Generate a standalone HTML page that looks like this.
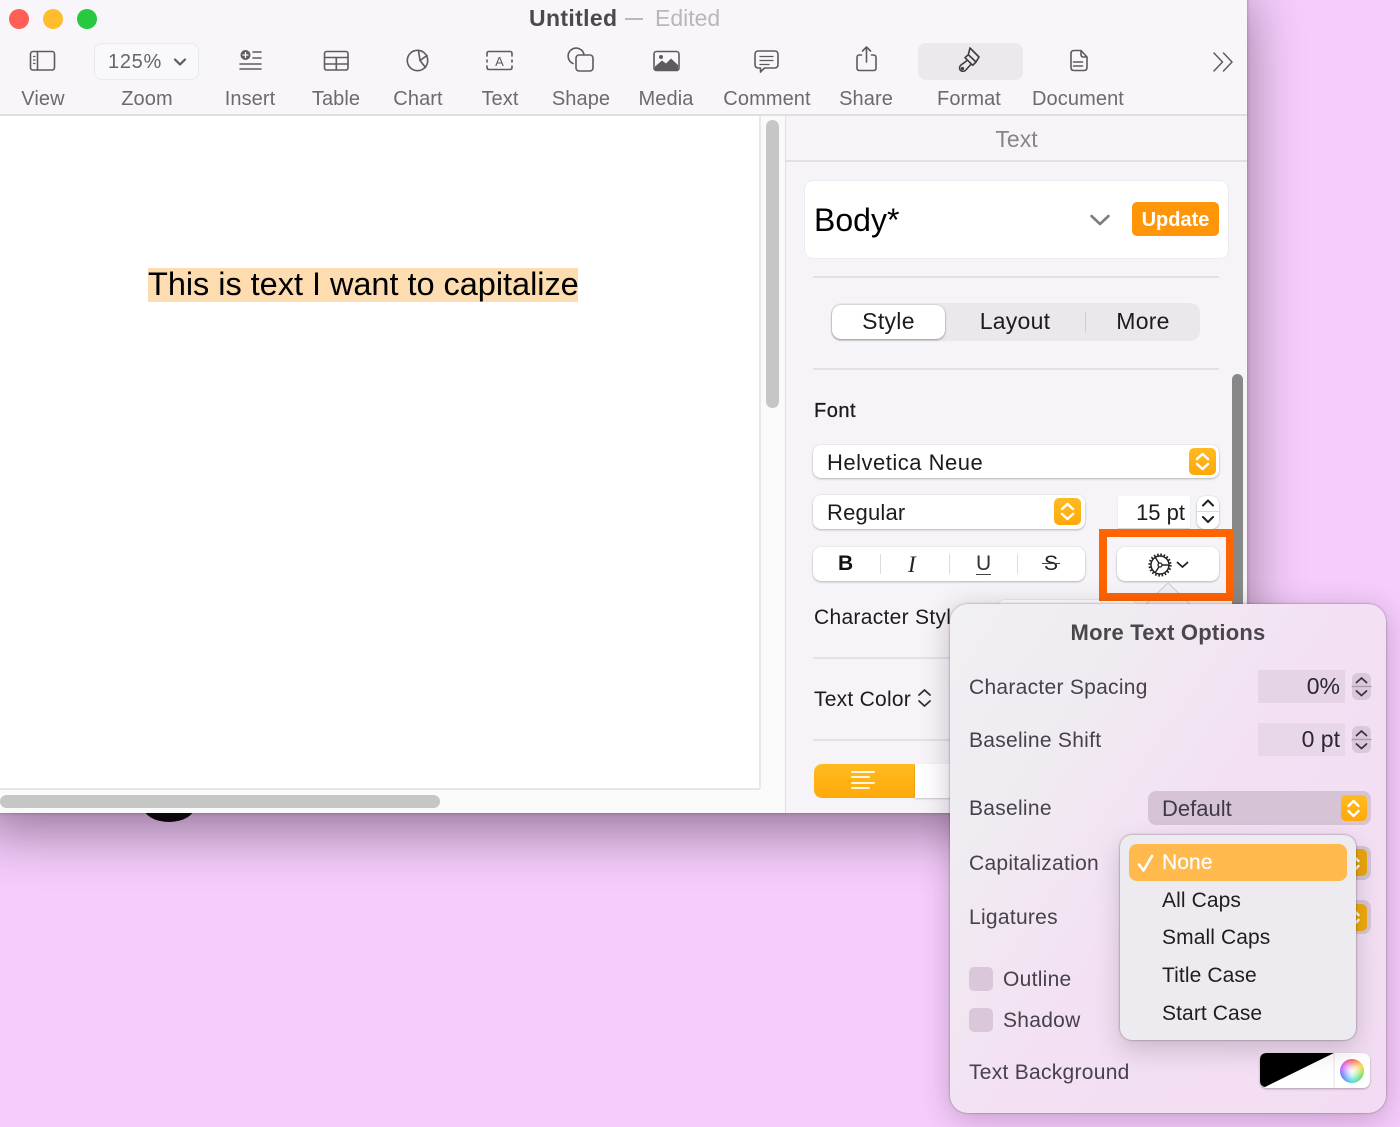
<!DOCTYPE html>
<html><head><meta charset="utf-8"><style>
html,body{margin:0;padding:0}
body{width:1400px;height:1127px;position:relative;overflow:hidden;background:#f5cdfb;font-family:"Liberation Sans",sans-serif;color:#1d1b1e}
div,span,svg{position:absolute}
.t{white-space:nowrap;line-height:1}
.l{font-size:20px;color:#6d6a6e;white-space:nowrap;text-align:center;line-height:1;top:89px;letter-spacing:.1px}
.p{font-size:21px;color:#46414a;white-space:nowrap;line-height:1;letter-spacing:.28px}
.m{font-size:21px;color:#1f1d20;white-space:nowrap;line-height:1;left:1162px;letter-spacing:.1px}
.sep{background:#e3e1e5;height:2px}
.f{background:#fff;border-radius:8px;box-shadow:0 1px 2px rgba(0,0,0,.25),0 0 1px rgba(0,0,0,.15)}
.o{background:linear-gradient(#ffbb22,#ffa908);border-radius:5px}
</style></head><body>

<!-- black blob behind window -->
<div style="left:143px;top:790px;width:52px;height:32px;background:#000;border-radius:50%"></div>

<!-- window -->
<div style="left:-20px;top:-20px;width:1267px;height:833px;background:#f8f6fa;border-radius:0 0 14px 14px;border-top-right-radius:20px;box-shadow:0 18px 55px rgba(40,20,40,.48),0 0 3px rgba(0,0,0,.3);overflow:hidden">
  <div style="left:20px;top:134px;width:1267px;height:2px;background:#e0dee2"></div>
  <div style="left:0;top:136px;width:780px;height:672px;background:#fff"></div>
  <div style="left:780px;top:136px;width:26px;height:697px;background:#fbfafb"></div>
  <div style="left:0;top:808px;width:806px;height:25px;background:#fafafa"></div>
  <div style="left:0;top:808px;width:780px;height:2px;background:#e6e5e7"></div>
  <div style="left:779px;top:136px;width:2px;height:673px;background:#e8e7e9"></div>
  <div style="left:805px;top:136px;width:2px;height:697px;background:#e0dee2"></div>
  <div style="left:806px;top:136px;width:461px;height:697px;background:#f6f4f8"></div>
</div>

<!-- traffic lights -->
<div style="left:9px;top:9px;width:20px;height:20px;border-radius:50%;background:#ff5f57"></div>
<div style="left:43px;top:9px;width:20px;height:20px;border-radius:50%;background:#ffbd2e"></div>
<div style="left:77px;top:9px;width:20px;height:20px;border-radius:50%;background:#28c840"></div>

<!-- title -->
<div class="t" style="left:529px;top:7px;font-size:23px;font-weight:bold;color:#4c494d;letter-spacing:.35px">Untitled</div>
<div style="left:625px;top:18px;width:18px;height:2px;background:#bbb8bc"></div>
<div class="t" style="left:655px;top:7px;font-size:23px;color:#bab7bb">Edited</div>

<!-- toolbar labels -->
<div class="l" style="left:3px;width:80px">View</div>
<div class="l" style="left:107px;width:80px">Zoom</div>
<div class="l" style="left:210px;width:80px">Insert</div>
<div class="l" style="left:296px;width:80px">Table</div>
<div class="l" style="left:378px;width:80px">Chart</div>
<div class="l" style="left:460px;width:80px">Text</div>
<div class="l" style="left:541px;width:80px">Shape</div>
<div class="l" style="left:626px;width:80px">Media</div>
<div class="l" style="left:717px;width:100px">Comment</div>
<div class="l" style="left:826px;width:80px">Share</div>
<div class="l" style="left:929px;width:80px">Format</div>
<div class="l" style="left:1018px;width:120px">Document</div>

<!-- zoom control -->
<div style="left:94px;top:43px;width:103px;height:35px;border:1px solid #ebe9ed;border-radius:8px;background:#f9f8fb"></div>
<div class="t" style="left:108px;top:52px;font-size:20px;color:#66636a;letter-spacing:.7px">125%</div>
<!-- format highlight -->
<div style="left:918px;top:43px;width:105px;height:37px;background:#ebe9ed;border-radius:8px"></div>

<!-- toolbar icons -->
<svg style="left:0;top:0" width="1247" height="90" fill="none" stroke="#5e5b60" stroke-width="1.6" stroke-linecap="round" stroke-linejoin="round">
  <path d="M175 59.500l5 5 5-5" stroke-width="2.200"/>
  <!-- view -->
  <rect x="30.500" y="51.500" width="24" height="18.500" rx="2.500"/><path d="M37.500 52v18"/><path d="M33.500 56.500h1.500M33.500 60h1.500M33.500 63.500h1.500" stroke-width="1.200"/>
  <!-- insert -->
  <circle cx="245.500" cy="55" r="5" fill="#5e5b60" stroke="none"/><path d="M243 55h5M245.500 52.500v5" stroke="#fff" stroke-width="1.300"/><path d="M253 52h8M253 58h8M240 64h21M240 69h21"/>
  <!-- table -->
  <rect x="324.500" y="51.500" width="23.500" height="18.500" rx="2"/><path d="M325 57.500h23M325 64h23M336.300 57.500v12.500"/>
  <!-- chart -->
  <circle cx="417.500" cy="60.500" r="10.200"/><path d="M418.500 50.500l1.500 10 7-5M420 60.500l5.500 7"/>
  <!-- text -->
  <path d="M487 56v-2.500q0-2 2-2h21q2 0 2 2v2.500M487 60v2M512 60v2M487 66v1.500q0 2 2 2h21q2 0 2-2v-1.500"/>
  <text x="499.500" y="66" font-family="Liberation Sans" font-size="13" fill="#5e5b60" stroke="none" text-anchor="middle">A</text>
  <!-- shape -->
  <path d="M573 63.500a8 8 0 1 1 11-8.800"/><rect x="576" y="55" width="17" height="16" rx="3"/>
  <!-- media -->
  <rect x="654" y="51.500" width="25" height="19" rx="2.500"/><path d="M655 70v-3.500l7-6 4 3 5-5 7 6.500v5z" fill="#5e5b60" stroke="none"/><circle cx="661" cy="57" r="2" fill="#5e5b60" stroke="none"/>
  <!-- comment -->
  <path d="M758.500 51h16q3.500 0 3.500 3.500v10q0 3.500-3.500 3.500h-10l-4 4v-4h-2q-3.500 0-3.500-3.500v-10q0-3.500 3.500-3.500z"/><path d="M760 56.500h13M760 60.500h13M760 64.500h9" stroke-width="1.300"/>
  <!-- share -->
  <path d="M861.500 55h-2q-2.500 0-2.500 2.500V68q0 2.500 2.500 2.500h14q2.500 0 2.500-2.500V57.500q0-2.500-2.500-2.500h-2M866.500 62V47.500M862.500 51l4-4 4 4"/>
  <!-- format brush -->
  <g stroke="#3d3b3f">
    <path d="M970 48l9 9-3 5-3.300 3.300-7.700-7.600 3.300-3zM968.300 54.700l7.700 7.300"/>
    <path d="M966.500 61l-5.500 4a3.500 3.500 0 1 0 4.800 5l5-5.500"/>
    <circle cx="962.500" cy="68.500" r=".8"/>
  </g>
  <!-- document -->
  <path d="M1074 50.500h7l6 6.500v10.500q0 3-3 3h-10q-3 0-3-3v-14q0-3 3-3zM1081 50.500v4q0 2.500 2.500 2.500h3.500M1073.500 62h9M1073.500 66h9"/>
  <!-- more chevrons -->
  <path d="M1214 53l8.500 9-8.500 9M1223.500 53l8.500 9-8.500 9" stroke-width="1.500"/>
</svg>

<!-- canvas text -->
<div style="left:148px;top:268px;width:430px;height:34px;background:#fddcb0"></div>
<div class="t" style="left:148px;top:268px;font-size:32.500px;color:#000;letter-spacing:-.03px">This is text I want to capitalize</div>

<!-- scrollbars -->
<div style="left:766px;top:120px;width:13px;height:288px;border-radius:7px;background:#c6c6c6"></div>
<div style="left:0;top:795px;width:440px;height:13px;border-radius:7px;background:#c6c6c6"></div>
<div style="left:1232px;top:374px;width:11px;height:240px;border-radius:6px 6px 0 0;background:#888"></div>

<!-- inspector -->
<div class="t" style="left:786px;width:461px;text-align:center;top:128px;font-size:23px;color:#88858a">Text</div>
<div style="left:786px;top:160px;width:461px;height:2px;background:#e2e0e4"></div>

<div style="left:804px;top:180px;width:423px;height:77px;background:#fff;border:1px solid #ececee;border-radius:9px"></div>
<div class="t" style="left:814px;top:204px;font-size:32px;color:#000">Body*</div>
<svg style="left:1088px;top:212px" width="24" height="16" fill="none" stroke="#7f7d81" stroke-width="2.600" stroke-linecap="round" stroke-linejoin="round"><path d="M3.500 4l8.500 8 8.500-8"/></svg>
<div style="left:1132px;top:202px;width:87px;height:34px;background:#ff9609;border-radius:5px"></div>
<div class="t" style="left:1132px;width:87px;text-align:center;top:210px;font-size:20px;font-weight:bold;color:#fff">Update</div>
<div class="sep" style="left:813px;top:276px;width:406px"></div>

<div style="left:831px;top:303px;width:369px;height:38px;background:#eae8ec;border-radius:10px"></div>
<div style="left:832px;top:305px;width:113px;height:34px;background:#fff;border-radius:9px;box-shadow:0 1px 2px rgba(0,0,0,.35),0 0 1px rgba(0,0,0,.3)"></div>
<div style="left:1085px;top:312px;width:1px;height:20px;background:#cfcdd1"></div>
<div class="t" style="left:832px;width:113px;text-align:center;top:310px;font-size:23px;letter-spacing:.3px">Style</div>
<div class="t" style="left:950px;width:130px;text-align:center;top:310px;font-size:23px;letter-spacing:.25px">Layout</div>
<div class="t" style="left:1085px;width:116px;text-align:center;top:310px;font-size:23px;letter-spacing:.25px">More</div>
<div class="sep" style="left:813px;top:368px;width:406px"></div>

<div class="t" style="left:814px;top:401px;font-size:20px;letter-spacing:.5px;-webkit-text-stroke:.3px #1d1b1e">Font</div>

<div class="f" style="left:813px;top:445px;width:406px;height:33px"></div>
<div class="t" style="left:827px;top:452px;font-size:22px;letter-spacing:.5px">Helvetica Neue</div>
<div class="o" style="left:1189px;top:448px;width:27px;height:27px"></div>
<div class="f" style="left:813px;top:495px;width:272px;height:34px"></div>
<div class="t" style="left:827px;top:502px;font-size:22px;letter-spacing:.2px">Regular</div>
<div class="o" style="left:1054px;top:498px;width:27px;height:27px"></div>
<div style="left:1118px;top:496px;width:72px;height:32px;background:#fff;box-shadow:0 1px 1px rgba(0,0,0,.15)"></div>
<div class="t" style="right:215px;top:502px;font-size:22px">15 pt</div>
<div class="f" style="left:1197px;top:496px;width:22px;height:33px"></div>
<div style="left:1197px;top:511px;width:22px;height:1px;background:#dddbdf"></div>

<div class="f" style="left:813px;top:547px;width:272px;height:34px"></div>
<div style="left:880px;top:554px;width:1px;height:20px;background:#dddbdf"></div>
<div style="left:949px;top:554px;width:1px;height:20px;background:#dddbdf"></div>
<div style="left:1017px;top:554px;width:1px;height:20px;background:#dddbdf"></div>
<div class="t" style="left:838px;top:553px;font-size:21px;font-weight:bold;color:#111">B</div>
<div class="t" style="left:908px;top:553px;font-family:'Liberation Serif',serif;font-size:23px;font-style:italic;color:#222">I</div>
<div class="t" style="left:976px;top:553px;font-size:21px;color:#333">U</div>
<div style="left:976px;top:574px;width:15px;height:1px;background:#444"></div>
<div class="t" style="left:1044px;top:553px;font-size:21px;color:#222">S</div>
<div style="left:1042px;top:563px;width:18px;height:1px;background:#444"></div>
<div class="f" style="left:1117px;top:547px;width:102px;height:34px"></div>
<div class="t" style="left:814px;top:607px;font-size:21px;letter-spacing:.3px">Character Style</div>
<div class="f" style="left:997px;top:600px;width:140px;height:30px"></div>
<div class="sep" style="left:813px;top:657px;width:140px"></div>
<div class="t" style="left:814px;top:689px;font-size:21px;letter-spacing:.25px">Text Color</div>
<div class="sep" style="left:813px;top:739px;width:140px"></div>
<div style="left:814px;top:764px;width:101px;height:34px;background:linear-gradient(#ffbb22,#ffa908);border-radius:8px 0 0 8px"></div>
<div style="left:915px;top:764px;width:40px;height:34px;background:#fff;box-shadow:0 1px 2px rgba(0,0,0,.2)"></div>

<svg style="left:800px;top:440px" width="440" height="370" fill="none" stroke="#fff" stroke-width="2.500" stroke-linecap="round" stroke-linejoin="round">
  <path d="M397 19l5.500-5 5.500 5M397 24l5.500 5 5.500-5"/>
  <path d="M262 69l5.500-5 5.500 5M262 74l5.500 5 5.500-5"/>
  <path d="M403 65.500l5-5 5 5M403 77l5 5 5-5" stroke="#222" stroke-width="2"/>
  <path d="M119 255l5.500-5 5.500 5M119 261l5.500 5 5.500-5" stroke="#323034" stroke-width="1.800"/>
  <path d="M52 332h22M52 337h17M52 343h22M52 348h17" stroke-width="1.800"/>
</svg>

<!-- gear -->
<svg style="left:1145px;top:549px" width="50" height="32" fill="none" stroke="#222" stroke-linejoin="round">
  <circle cx="15" cy="16" r="9" stroke-width="1.500"/>
  <circle cx="15" cy="16" r="10.500" stroke-dasharray="1.600 1.700" stroke-width="2.200"/>
  <circle cx="15" cy="16" r="2" stroke-width="1.300"/>
  <path d="M17 16h7M14 14.300L10 8M14 17.700L10 24" stroke-width="1.400"/>
  <path d="M32.500 13.500l5 4.500 5-4.500" stroke-width="1.800" stroke-linecap="round"/>
</svg>

<!-- popover arrow (under orange rectangle) -->
<svg style="left:1140px;top:582px" width="56" height="24"><path d="M4 24L28 1l24 23z" fill="#f0eff2" stroke="#cfcdd1" stroke-width="1"/></svg>

<!-- orange rectangle -->
<div style="left:1099px;top:529px;width:119px;height:56px;border:8px solid #ff6400"></div>

<!-- popover -->
<div style="left:950px;top:604px;width:436px;height:509px;border-radius:18px;background:linear-gradient(125deg,#f1f0f3 0%,#f0ecf1 22%,#f3e0f3 52%,#f3dcf3 100%);box-shadow:0 0 2px rgba(0,0,0,.4),0 6px 30px rgba(40,10,40,.24)"></div>

<div class="t" style="left:950px;width:436px;text-align:center;top:622px;font-size:22px;font-weight:bold;color:#4a474c;letter-spacing:.2px">More Text Options</div>
<div class="p" style="left:969px;top:677px">Character Spacing</div>
<div class="p" style="left:969px;top:730px">Baseline Shift</div>
<div class="p" style="left:969px;top:798px">Baseline</div>
<div class="p" style="left:969px;top:853px">Capitalization</div>
<div class="p" style="left:969px;top:907px">Ligatures</div>
<div class="p" style="left:1003px;top:969px">Outline</div>
<div class="p" style="left:1003px;top:1010px">Shadow</div>
<div class="p" style="left:969px;top:1062px">Text Background</div>

<div style="left:1258px;top:670px;width:87px;height:33px;background:#e5d4e5"></div>
<div style="left:1258px;top:723px;width:87px;height:33px;background:#e8d7e8"></div>
<div class="t" style="right:60px;top:675px;font-size:23px;color:#2a282c">0%</div>
<div class="t" style="right:60px;top:728px;font-size:23px;color:#2a282c">0 pt</div>
<div style="left:1352px;top:673px;width:19px;height:27px;background:#dac8da;border-radius:6px"></div>
<div style="left:1352px;top:726px;width:19px;height:27px;background:#dac8da;border-radius:6px"></div>

<div style="left:1148px;top:791px;width:223px;height:34px;background:#d6c4d6;border-radius:8px"></div>
<div class="t" style="left:1162px;top:798px;font-size:22px;color:#3f3b42">Default</div>
<div class="o" style="left:1341px;top:795px;width:26px;height:26px"></div>
<div style="left:1340px;top:846px;width:31px;height:34px;background:#d3c2d3;border-radius:8px"></div>
<div class="o" style="left:1341px;top:849px;width:26px;height:27px;background:#eba50e"></div>
<div style="left:1340px;top:900px;width:31px;height:34px;background:#d6c5d6;border-radius:8px"></div>
<div class="o" style="left:1341px;top:904px;width:26px;height:27px;background:#f0aa0c"></div>

<div style="left:969px;top:967px;width:24px;height:24px;background:#dac8da;border-radius:5px"></div>
<div style="left:969px;top:1008px;width:24px;height:24px;background:#dac8da;border-radius:5px"></div>

<!-- text background well -->
<div style="left:1260px;top:1053px;width:110px;height:35px;background:#fff;border-radius:7px;box-shadow:0 1px 2px rgba(0,0,0,.3);overflow:hidden"></div>
<svg style="left:1260px;top:1053px" width="110" height="35"><path d="M0 7q0-7 7-7h67L5 34q-5-1-5-6z" fill="#000"/><path d="M74 0v35" stroke="#e5e3e7"/></svg>
<div style="left:1340px;top:1059px;width:24px;height:24px;border-radius:50%;background:radial-gradient(circle,#fff 0,rgba(255,255,255,.65) 30%,rgba(255,255,255,0) 70%),conic-gradient(#ff5a5a,#ffd23f,#6be05a,#4fd8d8,#5a7dff,#d85aff,#ff5a5a)"></div>

<!-- stepper arrows in popover -->
<svg style="left:1200px;top:660px" width="200" height="280" fill="none" stroke="#38353a" stroke-width="1.800" stroke-linecap="round" stroke-linejoin="round">
  <path d="M156.500 22.500l5-4.500 5 4.500M156.500 31l5 4.500 5-4.500M156.500 75.500l5-4.500 5 4.500M156.500 84l5 4.500 5-4.500"/>
  <path d="M152 26.500h19M152 79.500h19" stroke="#a99aa9" stroke-width="1.200"/>
  <path d="M148.500 146l5-5 5 5M148.500 151l5 5 5-5" stroke="#fff" stroke-width="2.300"/>
  <path d="M148.500 201l5-5 5 5M148.500 206l5 5 5-5M148.500 255l5-5 5 5M148.500 260l5 5 5-5" stroke="#fff" stroke-width="2.300"/>
</svg>

<!-- dropdown -->
<div style="left:1120px;top:835px;width:236px;height:205px;background:#edebef;border-radius:12px;box-shadow:0 0 2px rgba(0,0,0,.45),0 10px 26px rgba(0,0,0,.17)"></div>
<div style="left:1129px;top:844px;width:218px;height:37px;background:#ffb94c;border-radius:8px"></div>
<svg style="left:1136px;top:852px" width="22" height="22" fill="none" stroke="#fff" stroke-width="2.600" stroke-linecap="round" stroke-linejoin="round"><path d="M3 12.500l4.500 6L16 4"/></svg>
<div class="m" style="top:852px;color:#fff;-webkit-text-stroke:.2px #fff">None</div>
<div class="m" style="top:890px">All Caps</div>
<div class="m" style="top:927px">Small Caps</div>
<div class="m" style="top:965px">Title Case</div>
<div class="m" style="top:1003px">Start Case</div>

</body></html>
